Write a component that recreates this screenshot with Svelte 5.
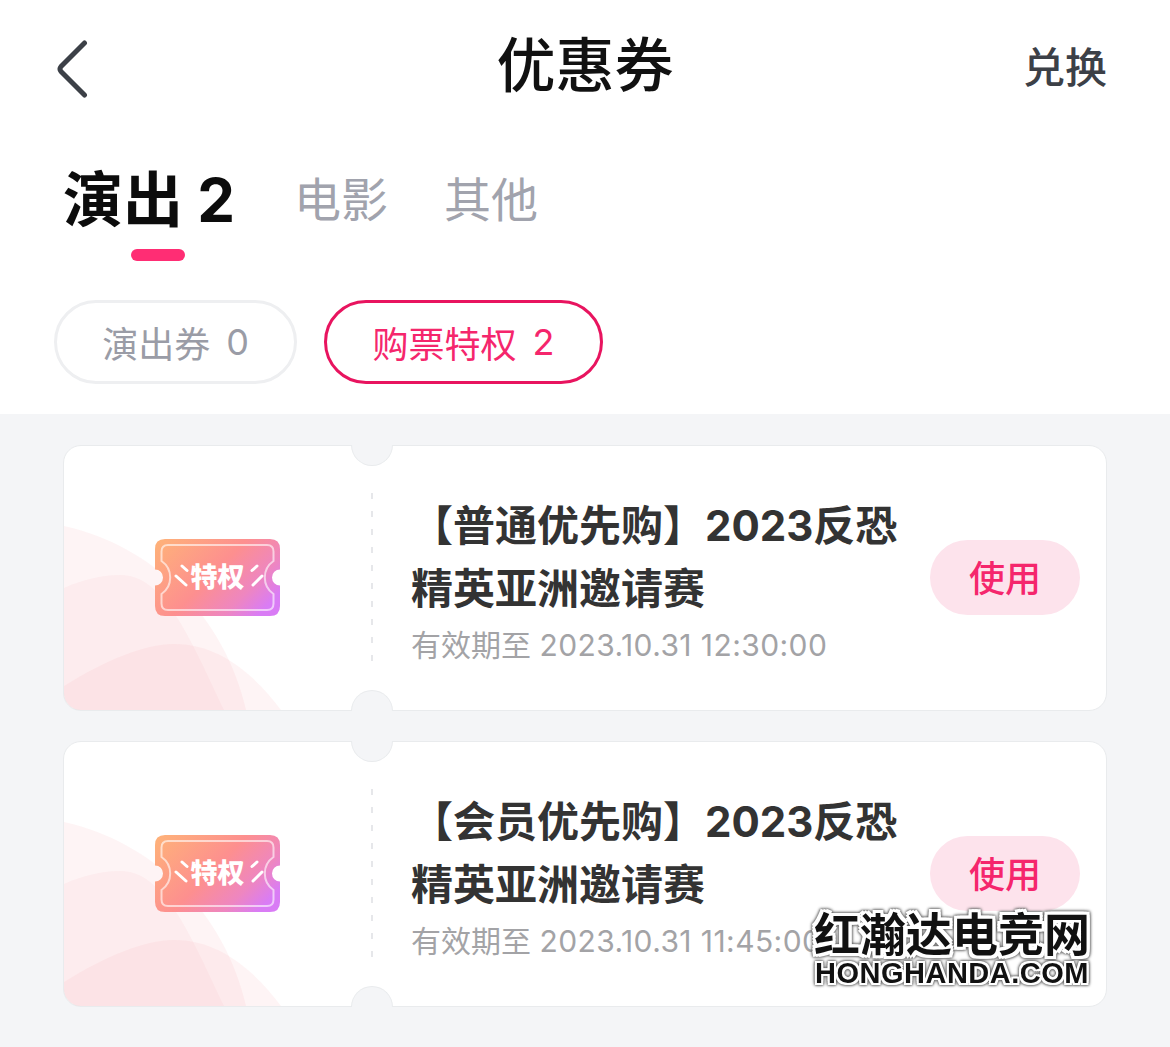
<script lang="ts">
	type Coupon = { id: string; title: string; expires: string };

	const coupons: Coupon[] = [
		{ id: 'normal', title: '【普通优先购】2023反恐精英亚洲邀请赛', expires: '2023.10.31 12:30:00' },
		{ id: 'member', title: '【会员优先购】2023反恐精英亚洲邀请赛', expires: '2023.10.31 11:45:00' }
	];
</script>

<div class="page">
	<div class="top">
		<header class="navbar">
			<button class="back" type="button" aria-label="返回">
				<svg width="32" height="58" viewBox="0 0 32 58">
					<path d="M28.500 3 L5 26.500 Q3 29 5 31.500 L28.500 55" fill="none" stroke="#3c4047" stroke-width="5" stroke-linecap="round" stroke-linejoin="round" />
				</svg>
			</button>
			<h1>优惠券</h1>
			<span class="redeem">兑换</span>
		</header>

		<nav class="tabs">
			<div class="tab active">
				<span>演出 2</span>
				<i class="underline"></i>
			</div>
			<div class="tab">电影</div>
			<div class="tab">其他</div>
		</nav>

		<div class="filters">
			<span class="pill"><span>演出券</span><span>0</span></span>
			<span class="pill selected"><span>购票特权</span><span>2</span></span>
		</div>
	</div>

	<main class="list">
		{#each coupons as coupon (coupon.id)}
			<article class="card">
				<svg class="deco" viewBox="0 0 1042 264" width="1042" height="264" aria-hidden="true">
					<path d="M0 80 C90 100 160 170 182 264 L0 264Z" fill="#f9a8b0" fill-opacity="0.12" />
					<path d="M0 142 C20 133 40 129 56 129 C100 129 125 190 160 264 L0 264Z" fill="#f9a8b0" fill-opacity="0.1" />
					<path d="M0 240 C40 215 80 198 110 198 C160 198 195 235 217 264 L0 264Z" fill="#f9a8b0" fill-opacity="0.12" />
				</svg>
				<i class="notch notch-top"></i>
				<i class="notch notch-bottom"></i>

				<svg class="ticket" width="125" height="77" viewBox="0 0 125 77" aria-hidden="true">
					<defs>
						<linearGradient id="ticket-{coupon.id}" x1="0" y1="0.1" x2="1" y2="0.7">
							<stop offset="0" stop-color="#feb07a" />
							<stop offset="0.5" stop-color="#fd8f8f" />
							<stop offset="0.8" stop-color="#ee86c0" />
							<stop offset="1" stop-color="#d97cf5" />
						</linearGradient>
					</defs>
					<path
						d="M10 0 H115 Q125 0 125 10 V30.500 A8 8 0 0 0 125 46.500 V67 Q125 77 115 77 H10 Q0 77 0 67 V46.500 A8 8 0 0 0 0 30.500 V10 Q0 0 10 0Z"
						fill="url(#ticket-{coupon.id})"
					/>
					<path
						d="M13 6 H112 Q118.500 6 118.500 12.500 V22 A20 20 0 0 0 118.500 55 V64.500 Q118.500 71 112 71 H13 Q6.500 71 6.500 64.500 V55 A20 20 0 0 0 6.500 22 V12.500 Q6.500 6 13 6Z"
						fill="none"
						stroke="#fff"
						stroke-opacity="0.6"
						stroke-width="2"
					/>
					<path d="M27 27 L32 31.500 M21 37 L31 46 M102 27 L97 31.500 M107 37 L98 46" stroke="#fff" stroke-width="3" stroke-linecap="round" />
					<text x="62.500" y="48" text-anchor="middle">特权</text>
				</svg>

				<i class="dashes"></i>

				<div class="info">
					<h2>{coupon.title}</h2>
					<p><span class="label">有效期至</span> <span class="date">{coupon.expires}</span></p>
				</div>

				<button class="use" type="button">使用</button>
			</article>
		{/each}
	</main>

	<div class="watermark" aria-hidden="true">
		<div class="wm-cn">红瀚达电竞网</div>
		<div class="wm-en">HONGHANDA.COM</div>
	</div>
</div>

<style>
	:global(body) {
		margin: 0;
		background: #f4f5f7;
	}

	.page {
		position: relative;
		width: 1170px;
		height: 1047px;
		overflow: hidden;
		background: #f4f5f7;
		font-family: Inter, 'Noto Sans CJK SC', sans-serif;
	}

	.top {
		background: #fff;
		height: 414px;
	}

	.navbar {
		display: flex;
		align-items: center;
		justify-content: space-between;
		height: 132px;
		padding: 6px 63px 0 56px;
		box-sizing: border-box;
		position: relative;
	}

	.back {
		display: flex;
		border: 0;
		padding: 0;
		background: none;
	}

	h1 {
		margin: 0;
		position: absolute;
		left: 0;
		right: 0;
		top: 0;
		text-align: center;
		font-size: 59px;
		font-weight: 500;
		color: #111;
		line-height: 132px;
	}

	.redeem {
		font-size: 42px;
		font-weight: 500;
		color: #3c4047;
		margin-top: -10px;
	}

	.tabs {
		display: flex;
		align-items: flex-start;
		gap: 56px;
		height: 168px;
		padding-left: 63px;
		box-sizing: border-box;
	}

	.tab {
		position: relative;
		font-size: 47px;
		line-height: 68px;
		color: #a1a3ad;
		margin-top: 34px;
	}

	.tab.active {
		font-size: 60px;
		font-weight: 700;
		color: #0c0c0c;
		margin-right: 3px;
		white-space: nowrap;
	}

	.underline {
		position: absolute;
		left: 68px;
		top: 83px;
		width: 54px;
		height: 12px;
		border-radius: 6px;
		background: #ff2d74;
	}

	.filters {
		display: flex;
		gap: 27px;
		padding-left: 54px;
	}

	.pill {
		display: flex;
		align-items: center;
		justify-content: center;
		gap: 16px;
		box-sizing: border-box;
		width: 243px;
		height: 84px;
		border: 3px solid #eeeff1;
		border-radius: 42px;
		font-size: 36px;
		color: #9a9ca6;
	}

	.pill.selected {
		width: 279px;
		border-color: #e8145f;
		color: #f5266c;
	}

	.list {
		display: flex;
		flex-direction: column;
		gap: 30px;
		padding: 31px 63px 0;
	}

	.card {
		position: relative;
		display: flex;
		align-items: center;
		box-sizing: border-box;
		height: 266px;
		padding-left: 91px;
		background: #fff;
		border: 1px solid #e9ebed;
		border-radius: 18px;
	}

	.deco {
		position: absolute;
		left: 0;
		top: 0;
		border-radius: 17px;
	}

	.notch {
		position: absolute;
		left: 287px;
		width: 42px;
		height: 21px;
		box-sizing: border-box;
		background: #f4f5f7;
		border: 1px solid #e9ebed;
	}

	.notch-top {
		top: -1px;
		border-top: 0;
		border-radius: 0 0 21px 21px;
	}

	.notch-bottom {
		bottom: -1px;
		border-bottom: 0;
		border-radius: 21px 21px 0 0;
	}

	.ticket {
		position: relative;
		flex: none;
		margin-top: -2px;
	}

	.ticket text {
		font-family: 'Noto Sans CJK SC', sans-serif;
		font-size: 27px;
		font-weight: 900;
		fill: #fff;
	}

	.dashes {
		flex: none;
		width: 2px;
		height: 170px;
		margin-left: 91px;
		background: repeating-linear-gradient(to bottom, #e6e7ea 0 6px, transparent 6px 18px);
	}

	.info {
		flex: none;
		width: 505px;
		margin-left: 38px;
		margin-top: 3px;
	}

	h2 {
		margin: 0;
		font-size: 42px;
		line-height: 63px;
		font-weight: 700;
		color: #333;
	}

	.info p {
		margin: 5px 0 0;
		font-size: 30px;
		line-height: 40px;
		color: #a3a3a6;
		white-space: nowrap;
	}

	.date {
		letter-spacing: 0.42px;
	}

	.use {
		flex: none;
		width: 150px;
		height: 75px;
		margin-left: 14px;
		margin-top: -1px;
		padding: 0 0 3px;
		border: 0;
		border-radius: 38px;
		background: #fde3ec;
		color: #f5266c;
		font-family: inherit;
		font-size: 36px;
		font-weight: 500;
	}

	.watermark {
		position: absolute;
		left: 811px;
		top: 904px;
		width: 282px;
		color: #111;
		text-align: center;
		filter: drop-shadow(0 0 1.5px #555) drop-shadow(0 0 1px #888);
	}

	.wm-cn {
		font-family: 'Noto Sans CJK SC', sans-serif;
		font-size: 46px;
		line-height: 54px;
		font-weight: 700;
		text-shadow: 3px 0 #fff, -3px 0 #fff, 0 3px #fff, 0 -3px #fff, 3px 3px #fff, -3px -3px #fff, 3px -3px #fff, -3px 3px #fff;
	}

	.wm-en {
		font-family: 'Liberation Sans', sans-serif;
		font-size: 29px;
		line-height: 30px;
		font-weight: 700;
		letter-spacing: 0.5px;
		white-space: nowrap;
		text-shadow: 2px 0 #fff, -2px 0 #fff, 0 2px #fff, 0 -2px #fff, 2px 2px #fff, -2px -2px #fff, 2px -2px #fff, -2px 2px #fff;
	}
</style>
